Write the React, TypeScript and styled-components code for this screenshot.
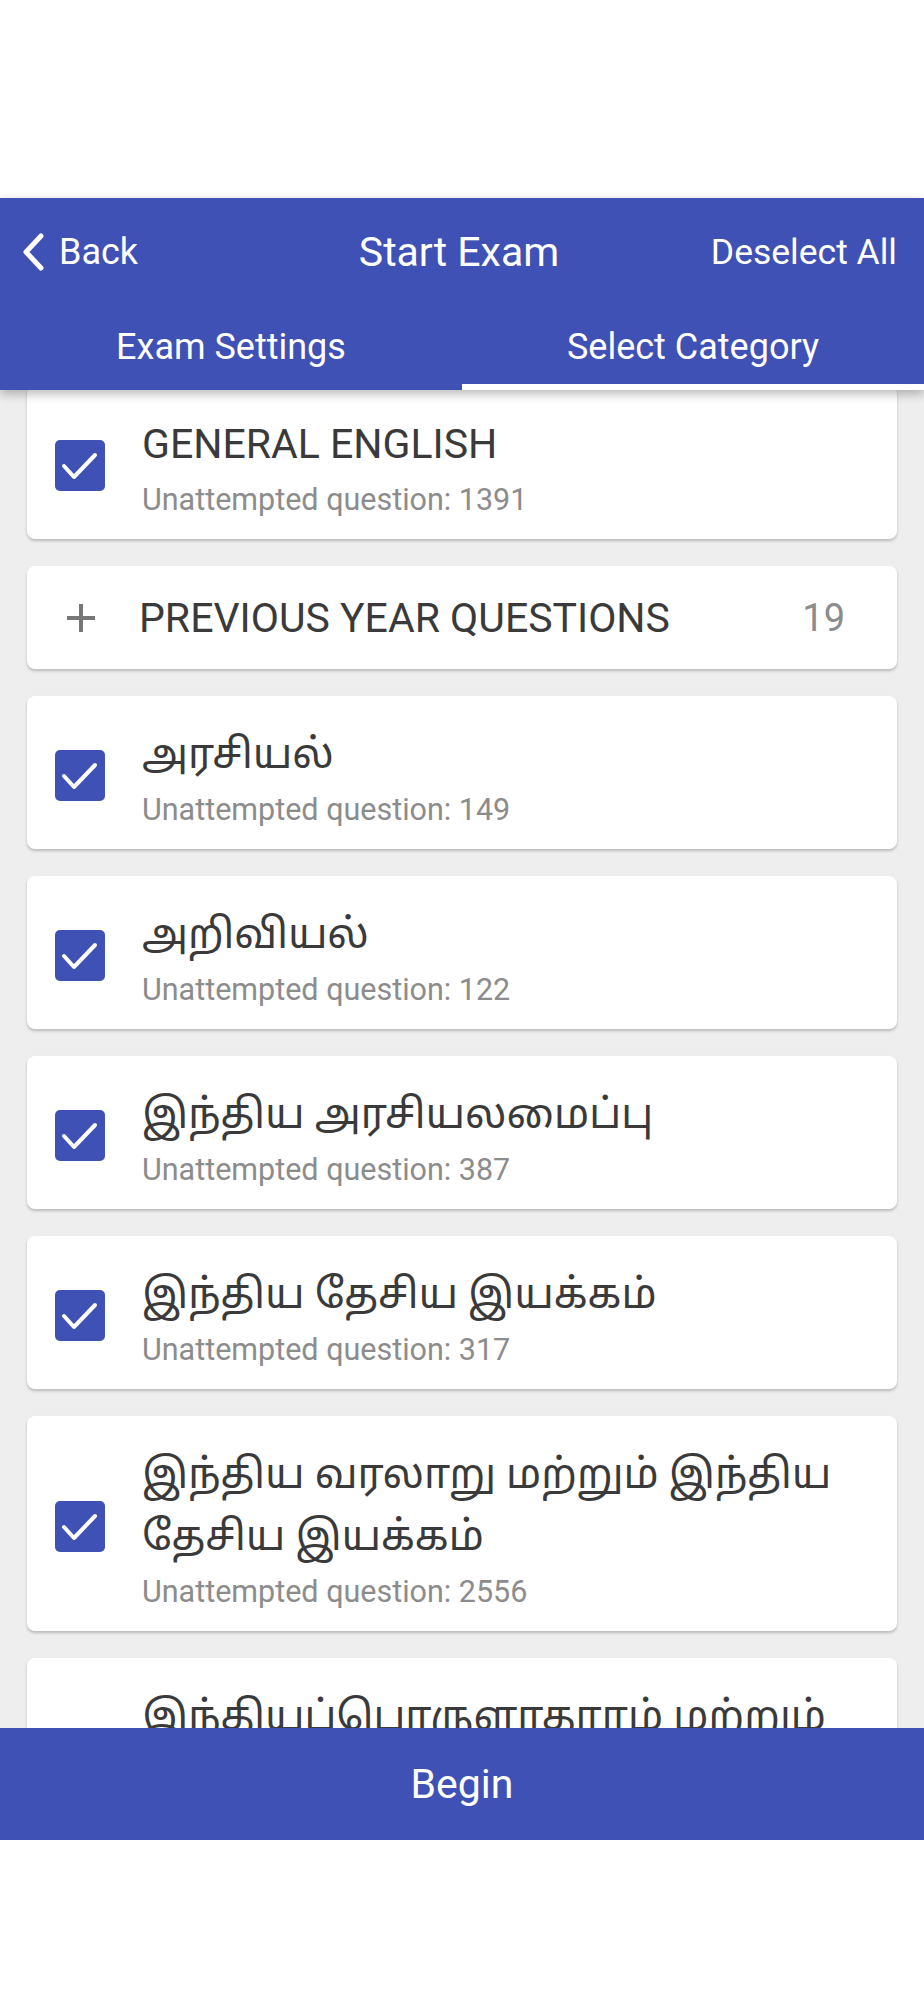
import * as React from "react"
import styled, { createGlobalStyle } from "styled-components"

//style
const GlobalStyle = createGlobalStyle`
  html, body {
    margin: 0;
    padding: 0;
    background: #ffffff;
  }
  body {
    font-family: Roboto, "Noto Sans Tamil", "Noto Sans", sans-serif;
  }
`

const Screen = styled.div`
  width: 924px;
  height: 2000px;
  display: flex;
  flex-direction: column;
  background: #ffffff;
  overflow: hidden;
`

const StatusSpace = styled.div`
  height: 198px;
  flex: none;
`

const Header = styled.header`
  position: relative;
  z-index: 2;
  flex: none;
  background: #3f51b5;
  color: #ffffff;
  box-shadow: 0 4px 10px rgba(0, 0, 0, 0.28);
`

const NavRow = styled.div`
  height: 108px;
  display: grid;
  grid-template-columns: 1fr auto 1fr;
  align-items: center;
  padding: 0 27px 0 21px;
`

const BackButton = styled.div`
  display: flex;
  align-items: center;
  gap: 14px;
  font-size: 36px;
`

const Title = styled.div`
  font-size: 41px;
`

const Action = styled.div`
  justify-self: end;
  font-size: 35.5px;
`

const Tabs = styled.div`
  height: 84px;
  display: grid;
  grid-template-columns: 1fr 1fr;
`

const Tab = styled.div<{ $active?: boolean }>`
  display: flex;
  align-items: center;
  justify-content: center;
  font-size: 36px;
  box-sizing: border-box;
  padding-top: 4px;
  border-bottom: 6px solid ${(p) => (p.$active ? "#ffffff" : "transparent")};
`

const List = styled.main`
  flex: none;
  height: 1342px;
  margin-top: -4px;
  background: #eeeeee;
  overflow: hidden;
  padding: 0 27px;
  display: flex;
  flex-direction: column;
  gap: 27px;
`

const Card = styled.div<{ $compact?: boolean }>`
  flex: none;
  background: #ffffff;
  border-radius: 8px;
  box-shadow: 0 2px 3px rgba(0, 0, 0, 0.22);
  display: flex;
  align-items: center;
  padding: ${(p) => (p.$compact ? "0 52px 0 38px" : "27px 28px 21px")};
  height: ${(p) => (p.$compact ? "103px" : "auto")};
  box-sizing: border-box;
`

const Check = styled.div`
  flex: none;
  width: 50px;
  height: 51px;
  border-radius: 5px;
  background: #3f51b5;
  display: flex;
  align-items: center;
  justify-content: center;
  margin-right: 37px;
`

const Texts = styled.div`
  display: flex;
  flex-direction: column;
  gap: 7px;
  min-width: 0;
`

const CardTitle = styled.div`
  font-size: 41px;
  line-height: 62px;
  color: #3a3a3a;
`

const Sub = styled.div`
  font-size: 30.5px;
  line-height: 36px;
  color: #8c8c8c;
`

const Plus = styled.div`
  flex: none;
  width: 32px;
  height: 32px;
  margin-right: 42px;
  display: flex;
`

const GroupTitle = styled.div`
  flex: 1;
  font-size: 41px;
  color: #3a3a3a;
`

const Count = styled.div`
  font-size: 38px;
  color: #8c8c8c;
`

const BeginBar = styled.footer`
  flex: none;
  height: 112px;
  background: #3f51b5;
  color: #ffffff;
  display: flex;
  align-items: center;
  justify-content: center;
  font-size: 41px;
`

//data
interface ICategory {
  title: string
  count?: number
}

const categories: ICategory[] = [
  { title: "அரசியல்", count: 149 },
  { title: "அறிவியல்", count: 122 },
  { title: "இந்திய அரசியலமைப்பு", count: 387 },
  { title: "இந்திய தேசிய இயக்கம்", count: 317 },
  { title: "இந்திய வரலாறு மற்றும் இந்திய தேசிய இயக்கம்", count: 2556 },
  { title: "இந்தியப்பொருளாதாரம் மற்றும் இந்திய வளர்ச்சி", count: 410 },
]

const CheckIcon = () => (
  <svg width="50" height="51" viewBox="0 0 50 51">
    <polyline
      points="9,26 19,37 40,15"
      fill="none"
      stroke="#ffffff"
      strokeWidth="4"
      strokeLinecap="round"
      strokeLinejoin="round"
    />
  </svg>
)

const CategoryCard = ({ title, count }: ICategory) => (
  <Card>
    <Check>
      <CheckIcon />
    </Check>
    <Texts>
      <CardTitle>{title}</CardTitle>
      <Sub>Unattempted question: {count}</Sub>
    </Texts>
  </Card>
)

const App = () => {
  return (
    <Screen>
      <GlobalStyle />
      <StatusSpace />
      <Header>
        <NavRow>
          <BackButton>
            <svg width="24" height="40" viewBox="0 0 24 40">
              <polyline
                points="20,4 5,20 20,36"
                fill="none"
                stroke="#ffffff"
                strokeWidth="5"
                strokeLinecap="round"
                strokeLinejoin="round"
              />
            </svg>
            Back
          </BackButton>
          <Title>Start Exam</Title>
          <Action>Deselect All</Action>
        </NavRow>
        <Tabs>
          <Tab>Exam Settings</Tab>
          <Tab $active>Select Category</Tab>
        </Tabs>
      </Header>
      <List>
        <CategoryCard title="GENERAL ENGLISH" count={1391} />
        <Card $compact>
          <Plus>
            <svg width="32" height="32" viewBox="0 0 32 32">
              <path d="M16 2v28M2 16h28" stroke="#777777" strokeWidth="4" />
            </svg>
          </Plus>
          <GroupTitle>PREVIOUS YEAR QUESTIONS</GroupTitle>
          <Count>19</Count>
        </Card>
        {categories.map((c) => (
          <CategoryCard key={c.title} {...c} />
        ))}
      </List>
      <BeginBar>Begin</BeginBar>
    </Screen>
  )
}

export default App
